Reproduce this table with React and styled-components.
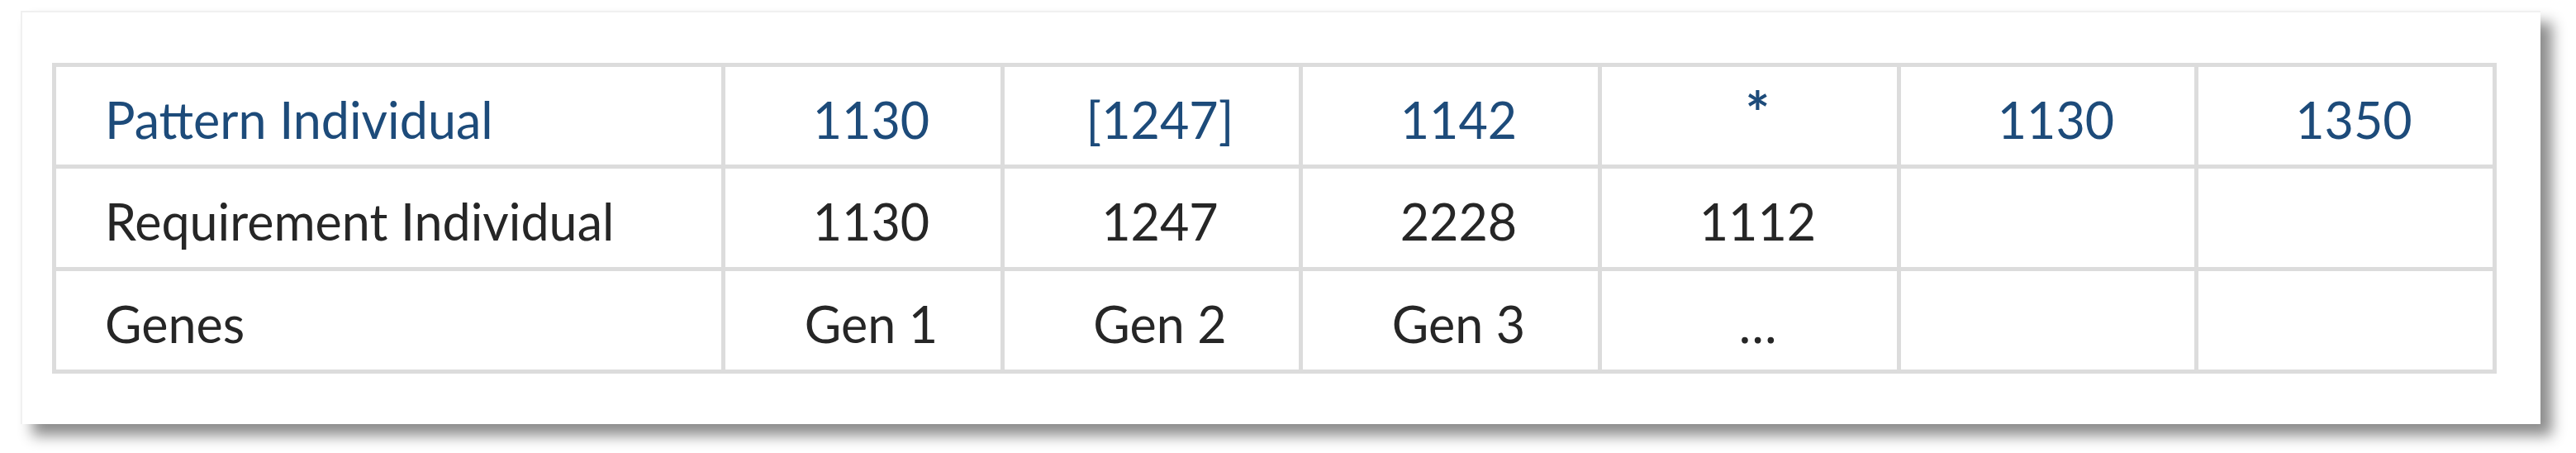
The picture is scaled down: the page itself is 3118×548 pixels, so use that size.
import React from "react";
import styled, { createGlobalStyle } from "styled-components";

const Global = createGlobalStyle`
  html, body { margin: 0; padding: 0; background: #ffffff; }
  body { font-family: "Lato", "Liberation Sans", sans-serif; }
`;

const Page = styled.div`
  width: 3118px;
  height: 548px;
  padding: 13px 0 0 25px;
  box-sizing: border-box;
  background: #ffffff;
`;

const Card = styled.div`
  width: 3050px;
  height: 500px;
  box-sizing: border-box;
  padding: 61px 0 0 36px;
  background: #ffffff;
  border-left: 2px solid #f0f0f0;
  border-top: 2px solid #f0f0f0;
  box-shadow: 14px 14px 16px rgba(0, 0, 0, 0.45);
`;

const Grid = styled.div`
  display: grid;
  grid-template-columns: 810px 338px 361px 362px 362px 360px 361px;
  grid-template-rows: 123px 124px 124px;
  width: max-content;
  border-left: 5px solid #dcdcdc;
  border-top: 5px solid #dcdcdc;
`;

const Cell = styled.div`
  box-sizing: border-box;
  border-right: 5px solid #dcdcdc;
  border-bottom: 5px solid #dcdcdc;
  display: flex;
  align-items: center;
  justify-content: ${(p) => (p.$label ? "flex-start" : "center")};
  padding: ${(p) => (p.$label ? "8px 0 0 59px" : "8px 0 0 20px")};
  font-size: 61px;
  color: ${(p) => (p.$blue ? "#1d4b7a" : "#262626")};
  white-space: nowrap;
`;

const Star = styled.span`
  font-size: 70px;
  font-weight: 700;
  line-height: 1;
  margin-bottom: 16px;
`;

const rows = [
  { blue: true, cells: ["Pattern Individual", "1130", "[1247]", "1142", "*", "1130", "1350"] },
  { blue: false, cells: ["Requirement Individual", "1130", "1247", "2228", "1112", "", ""] },
  { blue: false, cells: ["Genes", "Gen 1", "Gen 2", "Gen 3", "…", "", ""] },
];

export default function App() {
  return (
    <>
      <Global />
      <Page>
        <Card>
          <Grid>
            {rows.map((r, ri) =>
              r.cells.map((c, ci) => (
                <Cell key={`${ri}-${ci}`} $label={ci === 0} $blue={r.blue}>
                  {c === "*" ? <Star>*</Star> : c}
                </Cell>
              ))
            )}
          </Grid>
        </Card>
      </Page>
    </>
  );
}
